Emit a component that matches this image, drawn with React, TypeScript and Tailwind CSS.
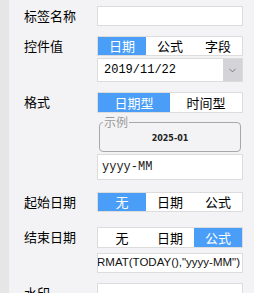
import { ChevronDown } from "lucide-react";

const cjk = "font-['Noto_Sans_CJK_SC','Noto_Sans',sans-serif]";

function Segmented({
  options,
  active,
  h,
}: {
  options: string[];
  active: number;
  h: string;
}) {
  return (
    <div className={`flex ${h} w-full border border-[#dcdcdc] bg-white`}>
      {options.map((o, i) => (
        <div
          key={o}
          className={`flex flex-1 items-center justify-center text-[13px] ${
            i === active ? "bg-[#4a9ef8] text-white" : "text-black"
          }`}
        >
          {o}
        </div>
      ))}
    </div>
  );
}

function Row({
  label,
  children,
  className = "",
}: {
  label: string;
  children: React.ReactNode;
  className?: string;
}) {
  return (
    <div className={`flex ${className}`}>
      <div className="w-[73px] shrink-0 text-[13px] leading-[20px] text-black">
        {label}
      </div>
      <div className="flex w-[146px] flex-col">{children}</div>
    </div>
  );
}

export default function App() {
  return (
    <div className={`flex h-[293px] w-[254px] overflow-hidden bg-[#f3f3f5] ${cjk}`}>
      <div className="w-[9px] shrink-0 bg-[#e6e6e6]" />
      <div className="flex flex-col pl-[15px] pt-[6px]">
        {/* 标签名称 */}
        <Row label="标签名称">
          <div className="h-[20px] border border-[#dcdcdc] bg-white" />
        </Row>

        {/* 控件值 */}
        <Row label="控件值" className="mt-[10px]">
          <Segmented options={["日期", "公式", "字段"]} active={0} h="h-[20px]" />
          <div className="mt-[2px] flex h-[24px] border border-[#dcdcdc] bg-white">
            <div className="flex flex-1 items-center pl-[6px] font-['Liberation_Mono',monospace] text-[12px] text-black">
              2019/11/22
            </div>
            <div className="flex w-[19px] items-center justify-center bg-[#d4d4d8]">
              <ChevronDown size={11} strokeWidth={1.5} className="text-[#555]" />
            </div>
          </div>
        </Row>

        {/* 格式 */}
        <Row label="格式" className="mt-[10px]">
          <Segmented options={["日期型", "时间型"]} active={0} h="h-[21px]" />
          <div className="mt-[3px] h-[36px]">
            <fieldset className="mx-[2px] h-full rounded-[4px] border border-[#a8a8a8] px-[3px]">
              <legend className="px-[1px] text-[12px] leading-[12px] text-[#9a9a9a]">
                示例
              </legend>
              <div className="pt-[6px] text-center font-['DejaVu_Sans',sans-serif] text-[8px] font-semibold leading-[10px] text-[#222]">
                2025-01
              </div>
            </fieldset>
          </div>
          <div className="mt-[2px] flex h-[26px] items-center border border-[#dcdcdc] bg-white pl-[4px] font-['Liberation_Mono',monospace] text-[12px] text-[#222]">
            yyyy-MM
          </div>
        </Row>

        {/* 起始日期 */}
        <Row label="起始日期" className="mt-[12px]">
          <Segmented options={["无", "日期", "公式"]} active={0} h="h-[20px]" />
        </Row>

        {/* 结束日期 */}
        <Row label="结束日期" className="mt-[15px]">
          <Segmented options={["无", "日期", "公式"]} active={2} h="h-[21px]" />
          <div className="mt-[5px] flex h-[20px] items-center justify-end overflow-hidden whitespace-nowrap border border-[#dcdcdc] bg-white pr-[2px] font-['Liberation_Sans',sans-serif] text-[11.5px] text-[#111]">
            =FORMAT(TODAY(),"yyyy-MM")
          </div>
        </Row>

        {/* 水印 */}
        <Row label="水印" className="mt-[10px]">
          <div className="h-[20px] border border-[#dcdcdc] bg-white" />
        </Row>
      </div>
    </div>
  );
}
